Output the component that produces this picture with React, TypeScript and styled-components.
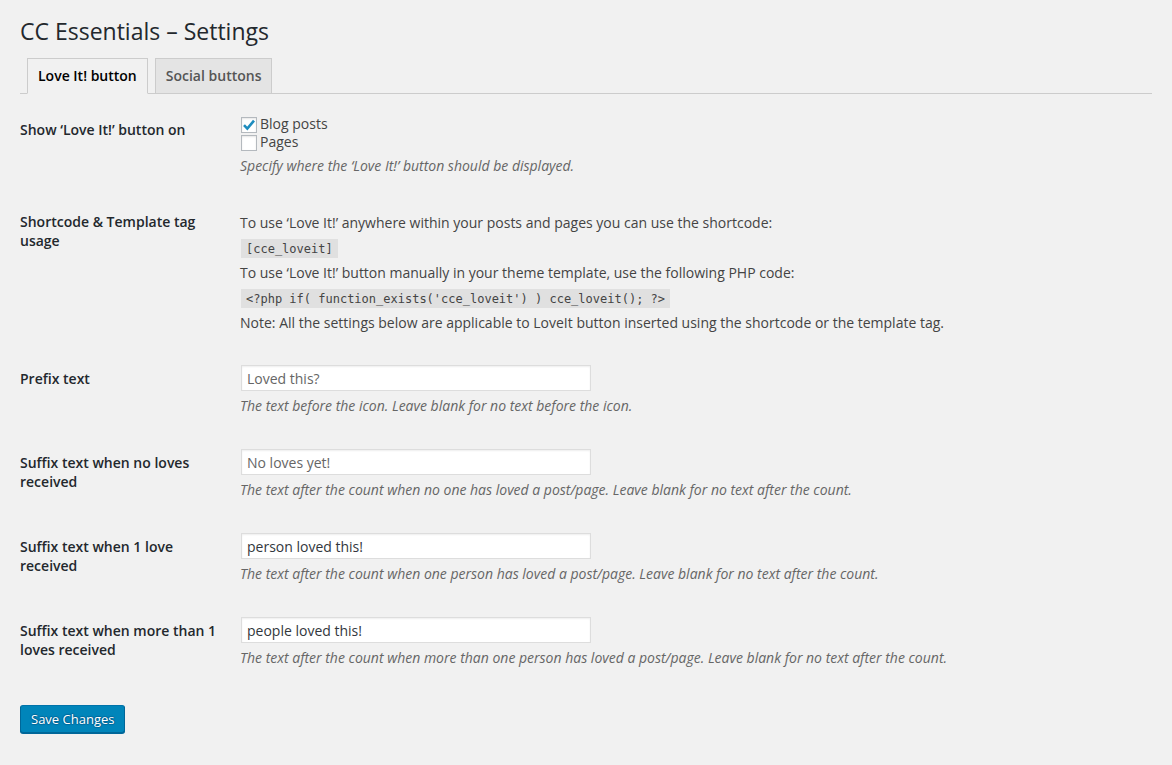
import React from "react";
import styled, { createGlobalStyle } from "styled-components";

const Global = createGlobalStyle`
  html, body { margin: 0; padding: 0; background: #f1f1f1; }
  body {
    font-family: "Open Sans", "Noto Sans", sans-serif;
    font-size: 14px;
    color: #444;
    -webkit-font-smoothing: antialiased;
  }
  * { box-sizing: border-box; }
`;

const Wrap = styled.div`
  padding: 8px 20px 40px 20px;
`;

const Title = styled.h1`
  margin: 0;
  padding: 9px 0 4px 0;
  font-size: 23px;
  line-height: 29px;
  font-weight: 400;
  color: #23282d;
`;

const TabBar = styled.div`
  display: flex;
  margin-top: 8px;
  border-bottom: 1px solid #ccc;
`;

const Tab = styled.a<{ $active?: boolean }>`
  display: block;
  margin: 0 0 -1px 7px;
  padding: 5px 10px;
  font-size: 14px;
  line-height: 24px;
  font-weight: 600;
  text-decoration: none;
  border: 1px solid #ccc;
  border-bottom-color: ${(p) => (p.$active ? "#f1f1f1" : "#ccc")};
  background: ${(p) => (p.$active ? "#f1f1f1" : "#e4e4e4")};
  color: ${(p) => (p.$active ? "#000" : "#555")};
`;

const FormTable = styled.div`
  margin-top: 6px;
`;

const Row = styled.div`
  display: grid;
  grid-template-columns: 210px 1fr;
`;

const Th = styled.div`
  padding: 20px 10px 20px 0;
  font-size: 14px;
  line-height: 19px;
  font-weight: 600;
  color: #23282d;
`;

const Td = styled.div<{ $pad?: string }>`
  padding: ${(p) => p.$pad || "15px 10px"};
  font-size: 14px;
  line-height: 22px;
`;

const Para = styled.p`
  margin: 4px 0 0 0;
  line-height: 21px;
`;

const Description = styled.p`
  margin: 4px 0 0 0;
  font-size: 14px;
  line-height: 22px;
  font-style: italic;
  color: #666;
`;

const Code = styled.code`
  font-family: "DejaVu Sans Mono", "Liberation Mono", monospace;
  font-size: 12px;
  line-height: 12px;
  padding: 3px 5px 2px 5px;
  margin: 0 1px;
  background: rgba(0, 0, 0, 0.07);
  color: #444;
`;

const CheckLabel = styled.label`
  display: flex;
  align-items: center;
  height: 18px;
  line-height: 18px;
  font-size: 14px;
  color: #444;
`;

const Box = styled.span`
  display: inline-flex;
  align-items: center;
  justify-content: center;
  width: 16px;
  height: 16px;
  margin: 2px 3px 0 1px;
  background: #fff;
  border: 1px solid #b4b9be;
  box-shadow: inset 0 1px 2px rgba(0, 0, 0, 0.1);
`;

const TextInput = styled.input`
  display: block;
  width: 350px;
  height: 26px;
  margin: 0 0 0 1px;
  padding: 2px 5px;
  font-family: "Open Sans", "Noto Sans", sans-serif;
  font-size: 14px;
  color: #32373c;
  background: #fff;
  border: 1px solid #ddd;
  box-shadow: inset 0 1px 2px rgba(0, 0, 0, 0.07);
  outline: none;
  &::placeholder { color: #666; opacity: 1; }
`;

const Submit = styled.div`
  padding-top: 20px;
`;

const PrimaryButton = styled.button`
  height: 28px;
  padding: 0 10px 1px;
  font-family: "Open Sans", "Noto Sans", sans-serif;
  font-size: 13px;
  line-height: 26px;
  color: #fff;
  background: #0085ba;
  border: 1px solid;
  border-color: #0073aa #006799 #006799;
  border-radius: 3px;
  box-shadow: 0 1px 0 #006799;
  text-shadow: 0 -1px 1px #006799, 1px 0 1px #006799, 0 1px 1px #006799, -1px 0 1px #006799;
  cursor: pointer;
`;

const Checkbox: React.FC<{ checked?: boolean; label: string }> = ({ checked, label }) => (
  <CheckLabel>
    <Box>
      {checked && (
        <svg width="14" height="14" viewBox="0 0 14 14">
          <path d="M2 7.2 L5.3 10.6 L12 2.6" fill="none" stroke="#1e8cbe" strokeWidth="2.6" strokeLinejoin="miter" />
        </svg>
      )}
    </Box>
    {label}
  </CheckLabel>
);

const fields = [
  {
    label: "Prefix text",
    value: "",
    placeholder: "Loved this?",
    desc: "The text before the icon. Leave blank for no text before the icon.",
  },
  {
    label: "Suffix text when no loves received",
    value: "",
    placeholder: "No loves yet!",
    desc: "The text after the count when no one has loved a post/page. Leave blank for no text after the count.",
  },
  {
    label: "Suffix text when 1 love received",
    value: "person loved this!",
    placeholder: "",
    desc: "The text after the count when one person has loved a post/page. Leave blank for no text after the count.",
  },
  {
    label: "Suffix text when more than 1 loves received",
    value: "people loved this!",
    placeholder: "",
    desc: "The text after the count when more than one person has loved a post/page. Leave blank for no text after the count.",
  },
];

export default function App() {
  return (
    <>
      <Global />
      <Wrap>
        <Title>CC Essentials – Settings</Title>
        <TabBar>
          <Tab $active>Love It! button</Tab>
          <Tab>Social buttons</Tab>
        </TabBar>
        <FormTable>
          <Row>
            <Th>Show ‘Love It!’ button on</Th>
            <Td>
              <Checkbox checked label="Blog posts" />
              <Checkbox label="Pages" />
              <Description>Specify where the ‘Love It!’ button should be displayed.</Description>
            </Td>
          </Row>
          <Row>
            <Th>Shortcode &amp; Template tag usage</Th>
            <Td $pad="16px 10px 16px 10px">
              <Para>To use ‘Love It!’ anywhere within your posts and pages you can use the shortcode:</Para>
              <Para><Code>[cce_loveit]</Code></Para>
              <Para>To use ‘Love It!’ button manually in your theme template, use the following PHP code:</Para>
              <Para><Code>{"<?php if( function_exists('cce_loveit') ) cce_loveit(); ?>"}</Code></Para>
              <Para>Note: All the settings below are applicable to LoveIt button inserted using the shortcode or the template tag.</Para>
            </Td>
          </Row>
          {fields.map((f) => (
            <Row key={f.label}>
              <Th>{f.label}</Th>
              <Td $pad="16px 10px 16px 10px">
                <TextInput type="text" defaultValue={f.value} placeholder={f.placeholder} />
                <Description>{f.desc}</Description>
              </Td>
            </Row>
          ))}
        </FormTable>
        <Submit>
          <PrimaryButton>Save Changes</PrimaryButton>
        </Submit>
      </Wrap>
    </>
  );
}
